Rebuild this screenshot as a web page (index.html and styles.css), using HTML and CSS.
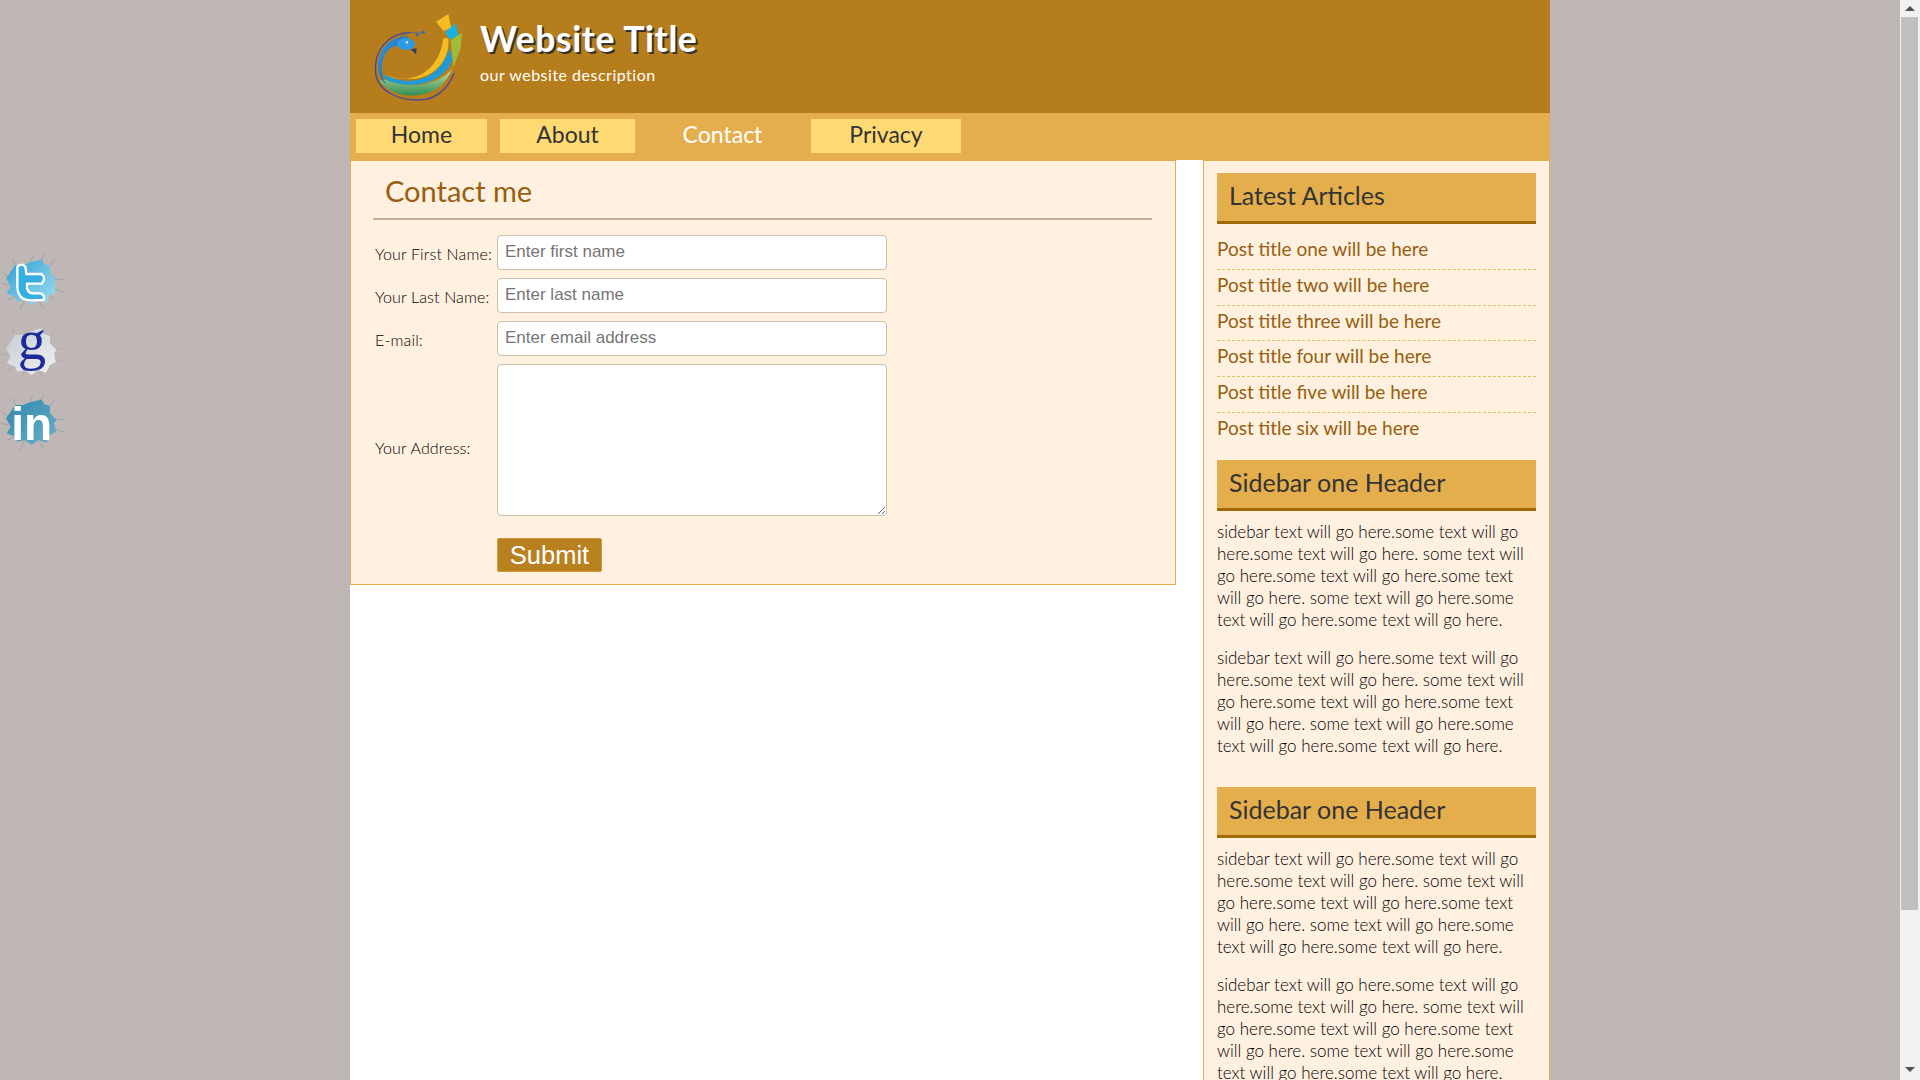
FILE: index.html
```html
<!DOCTYPE html>
<html lang="en">
<head>
<meta charset="utf-8">
<title>Website Title</title>
<link rel="stylesheet" href="styles.css">
</head>
<body>
<div class="social">
  <svg class="burst" viewBox="0 0 195 195" width="65" height="65">
    <defs><linearGradient id="tw" x1="0" y1="0" x2="1" y2="1"><stop offset="0" stop-color="#2f9fd2"/><stop offset="1" stop-color="#a2def3"/></linearGradient></defs>
    <polygon fill="url(#tw)" points="18,85 32,65 45,45 70,45 90,37 110,32 125,28 132,42 150,48 150,70 170,90 162,100 168,125 150,135 138,158 115,150 95,165 75,150 52,155 45,140 20,130 32,110"/>
    <path class="crack" d="M30 85 L5 65 M25 105 L2 100 M45 42 L38 25 M90 35 L98 18 M125 28 L132 12 M150 48 L165 28 M165 88 L190 88 M165 118 L190 125 M150 135 L162 150 M115 150 L130 175 M75 150 L60 180 M45 140 L22 150"/>
    <path class="tw-t" d="M52 50 Q65 38 76 50 L79 72 L124 72 Q140 85 125 101 L81 101 L81 115 Q85 130 100 130 L122 130 Q137 136 130 150 L95 151 Q53 151 52 110 Z"/>
  </svg>
  <svg class="burst" viewBox="0 0 195 195" width="65" height="65">
    <defs><linearGradient id="gg" x1="0" y1="0" x2="1" y2="1"><stop offset="0" stop-color="#c5ccd2"/><stop offset="1" stop-color="#f0f2f4"/></linearGradient></defs>
    <polygon fill="url(#gg)" points="18,85 32,65 45,45 70,45 90,35 110,28 125,25 132,42 150,48 150,70 170,90 162,100 168,125 150,135 138,158 115,150 95,165 75,150 52,155 45,140 20,130 32,110"/>
    <path class="crack crack-light" d="M30 85 L5 65 M25 105 L2 100 M45 42 L38 25 M125 25 L132 10 M150 48 L165 28 M165 88 L190 88 M165 118 L190 125 M115 150 L130 175 M75 150 L60 180 M45 140 L22 150"/>
    <text class="g-letter" x="96" y="116" text-anchor="middle">g</text>
  </svg>
  <svg class="burst" viewBox="0 0 195 195" width="65" height="65">
    <defs><linearGradient id="li" x1="0" y1="0" x2="1" y2="1"><stop offset="0" stop-color="#2f86ad"/><stop offset="1" stop-color="#6bb0ca"/></linearGradient></defs>
    <polygon fill="url(#li)" points="18,85 32,65 45,45 70,45 90,37 110,32 125,28 132,42 150,48 150,70 170,90 162,100 168,125 150,135 138,158 115,150 95,165 75,150 52,155 45,140 20,130 32,110"/>
    <path class="crack" d="M30 85 L5 65 M25 105 L2 100 M45 42 L38 25 M90 35 L98 18 M125 28 L132 12 M150 48 L165 28 M165 88 L190 88 M165 118 L190 125 M115 150 L130 175 M75 150 L60 180 M45 140 L22 150"/>
    <text class="in-letter" x="95" y="150" text-anchor="middle">in</text>
  </svg>
</div>

<div class="page">
  <header class="masthead">
    <svg class="logo" viewBox="0 0 360 300" width="120" height="100">
      <defs>
        <linearGradient id="grn" x1="0" y1="0" x2="0" y2="1"><stop offset="0" stop-color="#3f9a52"/><stop offset="0.55" stop-color="#b6d39a"/><stop offset="1" stop-color="#2f8f54"/></linearGradient>
        <linearGradient id="blu" x1="0" y1="0" x2="1" y2="1"><stop offset="0" stop-color="#2aa0e0"/><stop offset="1" stop-color="#2c4aa0"/></linearGradient>
      </defs>
      <path d="M150 82 C80 85 40 140 47 205 C55 265 130 290 190 284 C230 280 265 250 282 205" fill="none" stroke="#4c449c" stroke-width="4"/>
      <path d="M60 225 C85 280 200 290 250 235 C275 205 290 170 298 120 L278 190 C240 240 150 255 78 225 Z" fill="url(#grn)"/>
      <path d="M72 208 C150 250 240 225 268 130 L278 165 C245 240 150 255 78 225 Z" fill="#1f9bd8"/>
      <path d="M76 210 C140 240 235 215 250 100 L265 100 C272 180 200 252 76 210 Z" fill="#f6bd22"/>
      <path d="M145 95 C90 90 48 140 55 195 C58 215 66 228 78 238 C60 205 62 165 80 140 C95 122 115 118 130 128 Z" fill="url(#blu)"/>
      <ellipse cx="138" cy="117" rx="27" ry="18" fill="#2b9be2"/>
      <circle cx="141" cy="112" r="4" fill="#d8dcf0"/>
      <polygon points="152,133 170,130 168,148" fill="#24406f"/>
      <path d="M120 95 Q150 78 186 82" fill="none" stroke="#3f5ca8" stroke-width="2"/>
      <circle cx="172" cy="89" r="5" fill="#3f6cb0"/>
      <circle cx="190" cy="82" r="5" fill="#3f6cb0"/>
      <polygon points="228,50 265,27 274,70 250,78" fill="#f6bd22"/>
      <polygon points="255,80 288,55 295,95 268,102" fill="#16b2e4"/>
      <polygon points="272,105 306,83 302,130 280,185" fill="#a0bc3c"/>
    </svg>
    <div class="brand">
      <h1 class="site-title">Website Title</h1>
      <p class="site-desc">our website description</p>
    </div>
  </header>

  <nav class="navbar">
    <a class="nav-item nav-home">Home</a>
    <a class="nav-item nav-about">About</a>
    <a class="nav-item nav-active">Contact</a>
    <a class="nav-item nav-privacy">Privacy</a>
  </nav>

  <div class="columns">
    <main class="content">
      <h2 class="content-title">Contact me</h2>
      <form class="contact-form">
        <label class="field-label">Your First Name:</label>
        <input class="field" type="text" placeholder="Enter first name">
        <label class="field-label">Your Last Name:</label>
        <input class="field" type="text" placeholder="Enter last name">
        <label class="field-label">E-mail:</label>
        <input class="field" type="text" placeholder="Enter email address">
        <label class="field-label field-label-low">Your Address:</label>
        <textarea class="field field-area"></textarea>
        <button class="submit" type="button">Submit</button>
      </form>
    </main>
    <div class="gutter"></div>
    <aside class="sidebar">
      <h3 class="side-head">Latest Articles</h3>
      <ul class="articles">
        <li>Post title one will be here</li>
        <li>Post title two will be here</li>
        <li>Post title three will be here</li>
        <li>Post title four will be here</li>
        <li>Post title five will be here</li>
        <li>Post title six will be here</li>
      </ul>
      <h3 class="side-head">Sidebar one Header</h3>
      <p class="side-text">sidebar text will go here.some text will go<br>here.some text will go here. some text will<br>go here.some text will go here.some text<br>will go here. some text will go here.some<br>text will go here.some text will go here.</p>
      <p class="side-text">sidebar text will go here.some text will go<br>here.some text will go here. some text will<br>go here.some text will go here.some text<br>will go here. some text will go here.some<br>text will go here.some text will go here.</p>
      <h3 class="side-head side-head-gap">Sidebar one Header</h3>
      <p class="side-text">sidebar text will go here.some text will go<br>here.some text will go here. some text will<br>go here.some text will go here.some text<br>will go here. some text will go here.some<br>text will go here.some text will go here.</p>
      <p class="side-text">sidebar text will go here.some text will go<br>here.some text will go here. some text will<br>go here.some text will go here.some text<br>will go here. some text will go here.some<br>text will go here.some text will go here.</p>
    </aside>
  </div>
</div>

<div class="scrollbar">
  <span class="arrow arrow-up"></span>
  <span class="thumb"></span>
  <span class="arrow arrow-down"></span>
</div>
</body>
</html>
```
FILE: styles.css
```css
* { box-sizing: border-box; }
html, body { height: 100%; }
html { overflow: hidden; }
body {
  margin: 0;
  height: 1080px;
  overflow: hidden;
  background: #bfb6b6;
  font-family: "Lato", "Open Sans", sans-serif;
  font-weight: 300;
  color: #000;
}
.page {
  width: 1200px;
  margin-left: 350px;
  background: #fff;
  min-height: 1080px;
}
.masthead {
  height: 113px;
  background: #b67d1c;
  display: flex;
  align-items: flex-start;
}
.logo { margin: 5px 0 0 10px; flex: none; }
.brand { padding-top: 16px; }
.site-title {
  margin: 0;
  font-size: 35.5px;
  line-height: 46px;
  font-weight: 700;
  color: #fff;
  letter-spacing: 0.6px;
  text-shadow: 2px 2px 0 #333;
}
.site-desc {
  margin: 3px 0 0;
  font-size: 16px;
  line-height: 20px;
  font-weight: 400;
  color: #fff;
  letter-spacing: 0.5px;
}
.navbar {
  height: 48px;
  background: #e5ae4c;
  display: flex;
  align-items: flex-start;
  padding: 6px 0 0 6px;
}
.nav-item {
  height: 34px;
  line-height: 31px;
  text-align: center;
  background: #ffd972;
  color: #333;
  font-size: 23px;
  font-weight: 400;
}
.nav-home { width: 131px; margin-right: 13px; }
.nav-about { width: 135px; margin-right: 11px; }
.nav-active { width: 153px; margin-right: 12px; background: transparent; color: #fff; }
.nav-privacy { width: 150px; }
.columns {
  display: grid;
  grid-template-columns: 826px 27px 347px;
  align-items: start;
}
.gutter { height: 1px; margin-top: -1px; background: #fff; }
.content {
  background: #fff0e0;
  border: 1px solid #e5ae4c;
  border-top: 0;
  height: 424px;
  padding: 0 23px 0 22px;
}
.content-title {
  margin: 0;
  height: 59px;
  padding: 12px 0 0 12px;
  border-bottom: 2px solid #bfb09a;
  font-size: 29px;
  line-height: 36px;
  font-weight: 400;
  color: #96600f;
}
.contact-form {
  display: grid;
  grid-template-columns: 122px 390px;
  row-gap: 8px;
  align-items: center;
  padding-left: 2px;
  margin-top: 15px;
}
.field-label { font-size: 16px; color: #000; padding-top: 2px; letter-spacing: 0.15px; white-space: nowrap; }
.field-label-low { padding-top: 14px; }
.field {
  height: 35px;
  width: 390px;
  padding: 0 7px 2px;
  background: #fff;
  border: 1px solid #cdbfae;
  border-radius: 4px;
  font-family: "Liberation Sans", Arial, sans-serif;
  font-size: 17px;
  color: #333;
}
.field::placeholder { color: #757575; opacity: 1; }
.field-area { height: 152px; display: block; }
.submit {
  grid-column: 2;
  justify-self: start;
  margin-top: 14px;
  width: 105px;
  height: 34px;
  padding: 0;
  background: #b8801f;
  border: 1px solid #cf9a3c;
  border-radius: 2px;
  color: #fff;
  font-family: "Liberation Sans", Arial, sans-serif;
  font-size: 25.5px;
}
.sidebar {
  height: 919px;
  background: #fff0e0;
  border-left: 1px solid #e5ae4c;
  border-right: 1px solid #e5ae4c;
  padding: 12px 13px 0 13px;
  overflow: hidden;
}
.side-head {
  margin: 0;
  height: 51px;
  padding: 5px 12px 0;
  background: #e5ae4c;
  border-bottom: 3px solid #a06a08;
  font-size: 25px;
  line-height: 34px;
  font-weight: 400;
  color: #333;
}
.side-head-gap { margin-top: 30px; }
.articles { list-style: none; margin: 10px 0 11px; padding: 0; }
.articles li {
  height: 35.8px;
  line-height: 30px;
  font-size: 19px;
  font-weight: 400;
  color: #96600f;
  border-bottom: 1px dashed #d9c060;
}
.articles li:last-child { border-bottom: 0; }
.side-text {
  margin: 10px 0 16px;
  font-size: 17px;
  line-height: 22px;
  color: #000;
  white-space: nowrap;
}
.social {
  position: fixed;
  left: 0;
  top: 250px;
  display: flex;
  flex-direction: column;
  gap: 5px;
}
.burst { display: block; filter: blur(0.5px); }
.crack { fill: none; stroke: #7f8c92; stroke-width: 1.5; }
.crack-light { stroke: #9ea2a4; }
.tw-t { fill: #35aee0; stroke: #fff; stroke-width: 7; stroke-linejoin: round; }
.g-letter { font-family: "Liberation Serif", serif; font-size: 170px; fill: #1c2a9c; }
.in-letter { font-family: "Liberation Sans", sans-serif; font-weight: 700; font-size: 138px; fill: #fff; }
.scrollbar {
  position: fixed;
  right: 0;
  top: 0;
  width: 20px;
  height: 1080px;
  background: #f1f1f1;
}
.thumb { position: absolute; left: 1px; right: 2px; top: 17px; height: 893px; background: #c0c0c0; }
.arrow { position: absolute; left: 5px; width: 0; height: 0; border-left: 5px solid transparent; border-right: 5px solid transparent; }
.arrow-up { top: 6px; border-bottom: 5px solid #505050; }
.arrow-down { bottom: 8px; border-top: 5px solid #505050; }
```
